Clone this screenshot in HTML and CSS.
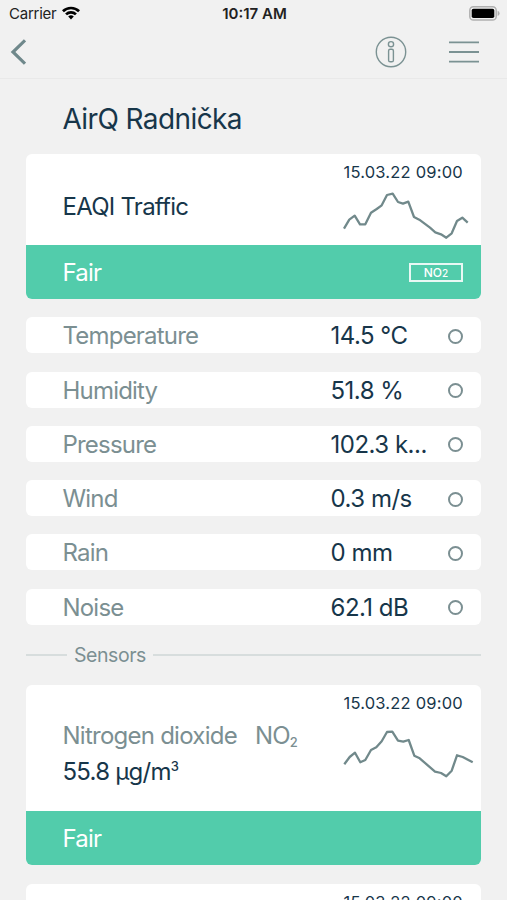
FILE: index.html
```
<!DOCTYPE html>
<html lang="en">
<head>
  <meta charset="UTF-8">
  <meta name="viewport" content="width=device-width, initial-scale=1.0">
  <title>AirQ Radnička</title>
  <link rel="stylesheet" href="styles.css">
</head>
<body>

  <!-- Status bar -->
  <div class="status-bar">
    <div class="status-left">
      <span class="carrier">Carrier</span>
      <svg class="wifi" width="18" height="14" viewBox="0 0 18 14">
        <path d="M0 4.3 A13 13 0 0 1 18 4.3 L16.1 6.2 A10.2 10.2 0 0 0 1.9 6.2 Z"/>
        <path d="M3.1 7.4 A8.6 8.6 0 0 1 14.9 7.4 L13 9.3 A5.8 5.8 0 0 0 5 9.3 Z"/>
        <path d="M6.2 10.5 A4.1 4.1 0 0 1 11.8 10.5 L9 13.4 Z"/>
      </svg>
    </div>
    <span class="clock">10:17 AM</span>
    <svg class="battery" width="31" height="15" viewBox="0 0 31 15">
      <rect x="0.8" y="0.8" width="26.4" height="13.2" rx="3.6" fill="none" stroke="#b0b0b0" stroke-width="1.5"/>
      <rect x="2.7" y="2.7" width="22.6" height="9.4" rx="1.8"/>
      <path d="M28.6 4.8 Q30.6 5.6 30.6 7.4 Q30.6 9.2 28.6 10 Z" fill="#b0b0b0"/>
    </svg>
  </div>

  <!-- Navigation -->
  <div class="nav">
    <svg class="back" width="16" height="28" viewBox="0 0 16 28">
      <path d="M15 2.3 L3 14 L15 25.7" fill="none" stroke="#6f888b" stroke-width="3.2"/>
    </svg>
    <div class="nav-icons">
      <svg width="32" height="32" viewBox="0 0 32 32" fill="none" stroke="#7b9293" stroke-width="1.4">
        <circle cx="16" cy="16" r="14.7"/>
        <circle cx="16" cy="8.2" r="2.6"/>
        <rect x="13.6" y="13.2" width="4.8" height="12.6" rx="1.6"/>
      </svg>
      <svg width="30" height="22" viewBox="0 0 30 22" stroke="#7b9293" stroke-width="1.8">
        <path d="M0 1.4 H30 M0 11 H30 M0 20.6 H30"/>
      </svg>
    </div>
  </div>

  <div class="content">
    <h1 class="title">AirQ Radnička</h1>

    <div class="card">
      <div class="card-top">
        <div class="card-name">EAQI Traffic</div>
        <div class="card-side">
          <div class="date">15.03.22 09:00</div>
          <svg class="chart" width="132" height="52" viewBox="0 0 132 52">
            <polyline points="1,38.7 6.3,29.7 11.7,25.7 17,34.3 22.3,34.3 28,22.7 33.7,19 38.7,15.3 44,5 49.7,3.7 55,12 60,13.7 65.3,11.7 71,27 76.3,29.7 87,37.7 92.3,42.3 98,44.3 103.3,47.7 108.7,43.3 114,31 119.3,27.7 124.7,32.7"/>
          </svg>
        </div>
      </div>
      <div class="card-status">
        <span class="fair">Fair</span>
        <span class="tag">NO<small>2</small></span>
      </div>
    </div>

    <!-- Measurements -->
    <div class="rows">
      <div class="row"><span class="label">Temperature</span><span class="value">14.5 °C</span><span class="ring"></span></div>
      <div class="row"><span class="label">Humidity</span><span class="value">51.8 %</span><span class="ring"></span></div>
      <div class="row"><span class="label">Pressure</span><span class="value">102.3 k...</span><span class="ring"></span></div>
      <div class="row"><span class="label">Wind</span><span class="value">0.3 m/s</span><span class="ring"></span></div>
      <div class="row"><span class="label">Rain</span><span class="value">0 mm</span><span class="ring"></span></div>
      <div class="row"><span class="label">Noise</span><span class="value">62.1 dB</span><span class="ring"></span></div>
    </div>

    <div class="divider"><span>Sensors</span></div>

    <!-- Sensors -->
    <div class="card">
      <div class="card-top card-top-sensor">
        <div class="sensor">
          <div class="sensor-name"><span>Nitrogen dioxide</span><span class="formula">NO<sub>2</sub></span></div>
          <div class="sensor-value">55.8 µg/m<sup>3</sup></div>
        </div>
        <div class="card-side">
          <div class="date">15.03.22 09:00</div>
          <svg class="chart chart-sensor" width="132" height="52" viewBox="0 0 132 52">
            <polyline points="1.3,36.3 6.7,29 12,24.7 17.3,34.3 22.3,32 28,22 33.3,19.3 38.7,13.3 44,4 49.3,3.7 55,12.7 60.3,13.7 65.7,12 71.3,27.7 76.7,30.3 92,43.7 98,45 103.3,48.3 108.7,42.7 114,27.3 119.7,29 129.7,34.3"/>
          </svg>
        </div>
      </div>
      <div class="card-status">
        <span class="fair">Fair</span>
      </div>
    </div>

    <div class="card">
      <div class="card-top card-top-sensor">
        <div class="sensor"></div>
        <div class="card-side">
          <div class="date">15.03.22 09:00</div>
        </div>
      </div>
    </div>
  </div>

</body>
</html>
```
FILE: styles.css
```
* {
  box-sizing: border-box;
}
body {
  margin: 0;
  height: 900px;
  overflow: hidden;
  background-color: #f1f1f1;
  color: #17364a;
  font-family: Inter, "Liberation Sans", sans-serif;
}
svg {
  display: block;
}
.status-bar {
  display: grid;
  grid-template-columns: 1fr auto 1fr;
  align-items: center;
  height: 26px;
  padding: 0 7px 0 9px;
  color: #222;
}
.status-left {
  display: flex;
  align-items: center;
  gap: 6px;
}
.carrier {
  font-size: 15px;
  line-height: 20px;
  padding-top: 1px;
  letter-spacing: -0.25px;
}
.clock {
  padding-top: 1px;
  font-size: 15px;
  font-weight: 600;
}
.battery {
  justify-self: end;
}
.nav {
  display: flex;
  align-items: center;
  justify-content: space-between;
  height: 53px;
  padding: 0 28px 0 10px;
  border-bottom: 1px solid #e9e9e9;
}
.nav-icons {
  display: flex;
  align-items: center;
  gap: 42px;
}
.content {
  padding: 0 26px;
}
.title {
  margin: 0;
  height: 75px;
  padding-left: 36.5px;
  font-size: 28px;
  line-height: 80px;
  font-weight: 400;
  letter-spacing: -0.6px;
}
.card {
  margin-bottom: 18.3px;
  border-radius: 6px;
  background-color: #fff;
  overflow: hidden;
}
.card-top {
  display: flex;
  justify-content: space-between;
  height: 91px;
  padding-left: 36.5px;
}
.card-top-sensor {
  height: 126.5px;
}
.card-name {
  padding-top: 12px;
  font-size: 24px;
  line-height: 81px;
  letter-spacing: -0.75px;
}
.card-side {
  width: 138px;
}
.date {
  padding-top: 8px;
  padding-left: 0.5px;
  font-size: 16.5px;
  line-height: 20px;
  letter-spacing: 0.2px;
  white-space: nowrap;
}
.chart {
  margin-top: 8px;
}
.chart-sensor {
  margin-top: 15.5px;
}
.chart polyline {
  fill: none;
  stroke: #71898b;
  stroke-width: 2.3;
  stroke-linejoin: round;
}
.card-status {
  display: flex;
  align-items: center;
  justify-content: space-between;
  height: 54px;
  padding: 0 18px 0 36.5px;
  background-color: #52ccab;
  color: #fff;
}
.fair {
  padding-top: 1px;
  font-size: 24px;
  letter-spacing: -0.75px;
}
.tag {
  width: 54px;
  height: 19px;
  border: 2px solid #e9f8f4;
  font-size: 12px;
  line-height: 16px;
  font-weight: 500;
  text-align: center;
}
.tag small {
  font-size: 10px;
}
.rows {
  display: grid;
  gap: 18.3px;
}
.row {
  display: flex;
  align-items: center;
  height: 36px;
  padding: 1px 18px 0 36.5px;
  border-radius: 6px;
  background-color: #fff;
  font-size: 24px;
  letter-spacing: -0.5px;
}
.label {
  width: 268px;
  color: #7b8f92;
  letter-spacing: -0.8px;
}
.value {
  flex: 1;
}
.ring {
  width: 15px;
  height: 15px;
  margin-top: 1px;
  border: 2px solid #7b8f92;
  border-radius: 50%;
}
.divider {
  display: flex;
  align-items: center;
  gap: 7px;
  height: 60px;
  color: #7b8f92;
  font-size: 19.5px;
  letter-spacing: -0.45px;
}
.divider::before,
.divider::after {
  content: "";
  height: 2px;
  background-color: #d7dddd;
}
.divider::before {
  width: 41px;
}
.divider::after {
  flex: 1;
}
.sensor {
  padding-top: 33px;
  font-size: 24px;
  line-height: 36px;
  letter-spacing: -0.75px;
}
.sensor-name {
  display: flex;
  gap: 18px;
  color: #7b8f92;
}
.sensor sub,
.sensor sup {
  font-size: 13px;
  line-height: 0;
  font-weight: 500;
}
.sensor sub {
  vertical-align: -3px;
}
.sensor sup {
  vertical-align: 9px;
}
```
